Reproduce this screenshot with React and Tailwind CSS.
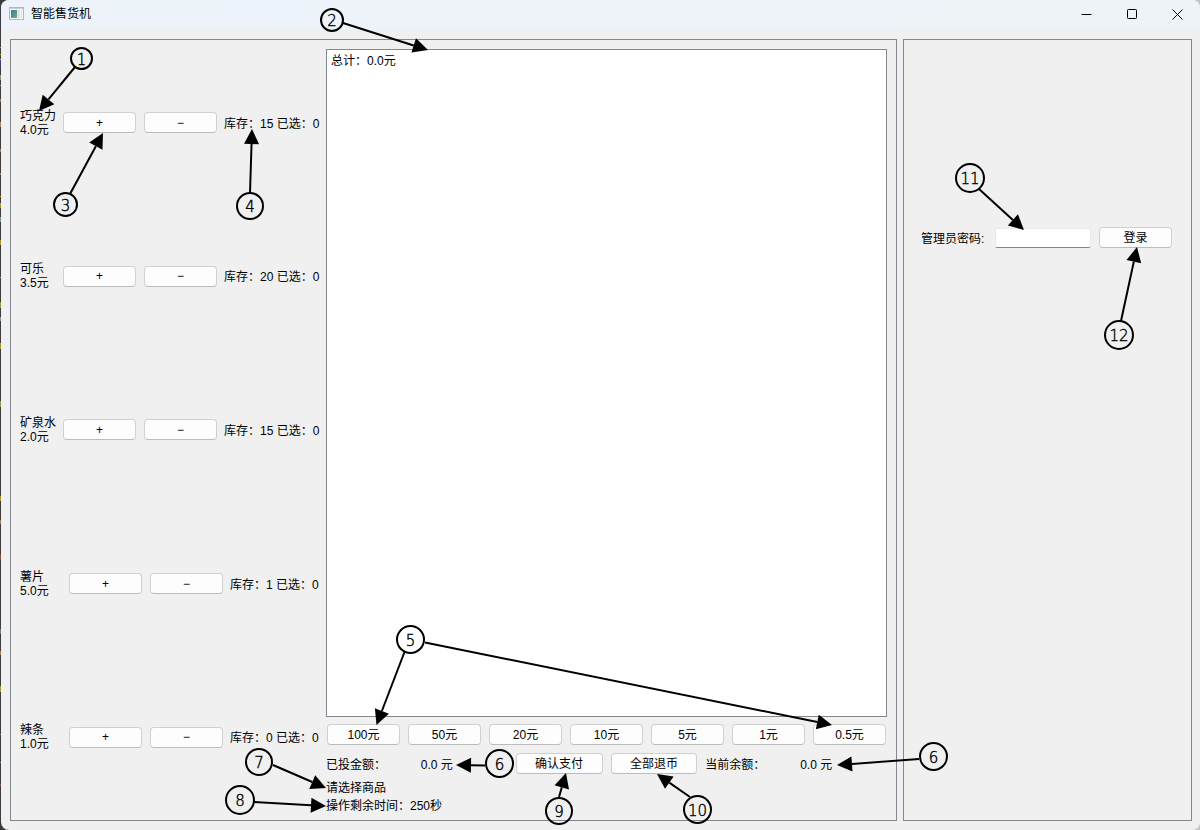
const products = [
  { name: '巧克力', price: '4.0元', stock: 15 },
  { name: '可乐', price: '3.5元', stock: 20 },
  { name: '矿泉水', price: '2.0元', stock: 15 },
  { name: '薯片', price: '5.0元', stock: 1 },
  { name: '辣条', price: '1.0元', stock: 0 },
];

const coins = ['100元', '50元', '20元', '10元', '5元', '1元', '0.5元'];

// Numbered callouts: circle centre and radius, then the arrows leaving it.
const callouts = [
  { n: 1, x: 81.5, y: 58.5, r: 10.5, arrows: [[75, 67, 39, 111]] },
  { n: 2, x: 332, y: 20, r: 11, arrows: [[343, 23, 428, 50]] },
  { n: 3, x: 65.5, y: 204.5, r: 11.5, arrows: [[70, 194, 103, 133]] },
  { n: 4, x: 250, y: 206, r: 13, arrows: [[250, 193, 252, 129]] },
  { n: 5, x: 410.5, y: 639.5, r: 13.5, arrows: [[404.5, 652, 376.5, 725], [425, 642.5, 832, 725]] },
  { n: 6, x: 499.5, y: 763.5, r: 13.5, arrows: [[485, 765.5, 456, 765]] },
  { n: 6, x: 933.5, y: 756.5, r: 13.5, arrows: [[919, 759, 837, 765]] },
  { n: 7, x: 259, y: 762, r: 13, arrows: [[273, 765, 326, 788]] },
  { n: 8, x: 240, y: 800, r: 14, arrows: [[254, 802, 326, 806]] },
  { n: 9, x: 559, y: 811, r: 13, arrows: [[559, 797, 566, 773]] },
  { n: 10, x: 697.5, y: 809.5, r: 13.5, arrows: [[690, 797, 657, 774]] },
  { n: 11, x: 970, y: 178, r: 14, arrows: [[979, 189, 1024, 230]] },
  { n: 12, x: 1119, y: 335, r: 14, arrows: [[1121, 321, 1137, 247]] },
];

// Bits of the desktop that show along the window's left edge: y, height, colour.
const specks = [
  [47, 1, '#b08a50'], [54, 1, '#b3a13c'], [59, 1, '#c9a83a'], [60, 6, '#3d3d9a'], [75, 5, '#7f9a86'],
  [85, 1, '#b3a13c'], [99, 3, '#a07a50'], [122, 5, '#a58563'], [149, 3, '#a07a50'], [173, 2, '#a07a50'],
  [196, 1, '#b3a13c'], [203, 5, '#a8962e'], [217, 5, '#6f9a96'], [240, 5, '#a8962e'], [277, 1, '#b3a13c'],
  [302, 6, '#8f9a3a'], [317, 4, '#6f9a96'], [343, 6, '#a8962e'], [401, 6, '#8f9a3a'], [496, 5, '#a8962e'],
  [520, 4, '#a07a50'], [554, 6, '#8a4a44'], [629, 5, '#5f7f96'], [651, 4, '#a07a50'], [686, 6, '#a8962e'],
  [734, 1, '#5f7f96'], [762, 1, '#5f9ac0'], [784, 2, '#8a4a44'],
];

function Arrow({ from }) {
  const [x1, y1, x2, y2] = from;
  const len = Math.hypot(x2 - x1, y2 - y1);
  const ux = (x2 - x1) / len;
  const uy = (y2 - y1) / len;
  const bx = x2 - ux * 15;
  const by = y2 - uy * 15;
  const points = `${x2},${y2} ${bx - uy * 7.5},${by + ux * 7.5} ${bx + uy * 7.5},${by - ux * 7.5}`;
  return (
    <g>
      <line x1={x1} y1={y1} x2={bx} y2={by} stroke="#000" strokeWidth="2" />
      <polygon points={points} fill="#000" />
    </g>
  );
}

function Callouts() {
  return (
    <svg className="pointer-events-none absolute top-0 left-0" width="1200" height="830" viewBox="0 0 1200 830">
      {specks.map(([y, h, fill]) => (
        <rect key={y} x="0" y={y} width="1" height={h} fill={fill} />
      ))}
      {callouts.map((c, i) => (
        <g key={i}>
          {c.arrows.map((a, j) => (
            <Arrow key={j} from={a} />
          ))}
          <circle cx={c.x} cy={c.y} r={c.r} fill="none" stroke="#000" strokeWidth="2" />
          <text
            x={c.x}
            y={c.y + 6}
            textAnchor="middle"
            stroke="#000"
            strokeWidth="0.4"
            className="fill-black font-['DejaVu_Sans',sans-serif] text-[15px] font-extralight"
          >
            {c.n}
          </text>
        </g>
      ))}
    </svg>
  );
}

function Button({ children, className = 'w-[73px]', ...rest }) {
  return (
    <button
      type="button"
      className={`flex h-[21px] items-center justify-center rounded border border-[#d0d0d0] border-b-[#bcbcbc] bg-[#fdfdfd] leading-4 ${className}`}
      {...rest}
    >
      {children}
    </button>
  );
}

function TitleBar() {
  return (
    <header className="flex h-[30px] items-center rounded-t-lg bg-linear-to-r from-[#eef3fb] to-[#edf3f7] pb-0.5 pl-2">
      <svg width="16" height="14" viewBox="0 0 16 14" aria-hidden="true">
        <defs>
          <linearGradient id="pane" x1="0" y1="0" x2="1" y2="1">
            <stop offset="0" stopColor="#3f74a8" />
            <stop offset="1" stopColor="#62b878" />
          </linearGradient>
        </defs>
        <rect x="0.5" y="0.5" width="14" height="12" fill="#fafafa" stroke="#b3b8bd" />
        <rect x="1" y="1" width="13" height="1" fill="#c9cdd0" />
        <rect x="2" y="3" width="6" height="8" fill="url(#pane)" />
        <rect x="8" y="3" width="3" height="8" fill="#dfe2e4" />
        <rect x="12" y="3" width="1" height="8" fill="#dfe2e4" />
      </svg>
      <h1 className="ml-[6px] flex-1 leading-4">智能售货机</h1>
      <div className="flex">
        <button type="button" aria-label="最小化" className="flex h-7 w-11 items-center justify-center">
          <svg width="11" height="11" viewBox="0 0 11 11"><path d="M0.5 5.5h10" stroke="#000" /></svg>
        </button>
        <button type="button" aria-label="最大化" className="flex h-7 w-[47px] items-center justify-center">
          <svg width="10" height="10" viewBox="0 0 10 10"><rect x="0.5" y="0.5" width="9" height="9" rx="0.8" fill="none" stroke="#000" /></svg>
        </button>
        <button type="button" aria-label="关闭" className="flex h-7 w-[45px] items-center justify-center">
          <svg width="11" height="11" viewBox="0 0 11 11"><path d="M0.5 0.5l10 10M10.5 0.5l-10 10" stroke="#000" /></svg>
        </button>
      </div>
    </header>
  );
}

function ProductRow({ name, price, stock }) {
  return (
    <li className="flex flex-1 items-center gap-[7px]">
      <div className="flex-1 leading-[14px]">
        <div>{name}</div>
        <div>{price}</div>
      </div>
      <div className="flex gap-2">
        <Button aria-label={`增加${name}`}>+</Button>
        <Button aria-label={`减少${name}`}>−</Button>
      </div>
      <div className={`pt-0.5 leading-4 whitespace-nowrap ${stock > 9 ? 'w-24' : 'w-[90px]'}`}>
        库存：{stock} 已选：0
      </div>
    </li>
  );
}

export default function App() {
  return (
    <div className="relative flex min-h-screen flex-col bg-linear-to-r from-[#3d3d40] from-50% to-[#c4c4c4] to-50% pl-px font-['Liberation_Sans','Noto_Sans_CJK_SC',sans-serif] text-xs text-black">
      <div className="flex flex-1 flex-col rounded-lg bg-[#f0f0f0]">
        <TitleBar />
        <main className="grid flex-1 grid-cols-[minmax(0,887fr)_minmax(0,289fr)] gap-[6px] pt-[9px] pr-2 pb-[9px] pl-[9px]">
          <section className="flex gap-[6px] border border-[#828790] pr-[9px] pl-[9px]">
            <ul className="flex w-[300px] flex-col py-[6px]">
              {products.map((p) => (
                <ProductRow key={p.name} {...p} />
              ))}
            </ul>
            <div className="flex min-w-0 flex-1 flex-col pt-[9px] pb-[5px]">
              <textarea
                readOnly
                aria-label="购物清单"
                defaultValue="总计：0.0元"
                className="block w-full flex-1 resize-none border border-[#828790] bg-white px-1 py-[3px] leading-4 outline-none"
              />
              <div className="mt-[7px] grid grid-cols-7 gap-2 px-px">
                {coins.map((c) => (
                  <Button key={c} className="w-full">{c}</Button>
                ))}
              </div>
              <div className="mt-2 grid grid-cols-6 items-center gap-2 leading-4">
                <span className="pt-0.5">已投金额：</span>
                <span className="pt-0.5">0.0 元</span>
                <Button className="w-full">确认支付</Button>
                <Button className="w-full">全部退币</Button>
                <span className="pt-0.5">当前余额：</span>
                <span className="pt-0.5">0.0 元</span>
              </div>
              <p className="mt-[5px] leading-[18px]">请选择商品</p>
              <p className="leading-[18px]">操作剩余时间：250秒</p>
            </div>
          </section>
          <section className="border border-[#828790] pt-[187px] pr-[19px] pl-[17px]">
            <form className="flex items-center gap-2" onSubmit={(e) => e.preventDefault()}>
              <label htmlFor="admin-password" className="w-[66px] pt-0.5 leading-4 whitespace-nowrap">管理员密码:</label>
              <input
                id="admin-password"
                type="password"
                className="h-5 min-w-0 flex-1 rounded-xs border border-[#e8e8e8] border-b-[#868686] bg-white px-1 outline-none"
              />
              <Button>登录</Button>
            </form>
          </section>
        </main>
      </div>
      <Callouts />
    </div>
  );
}
